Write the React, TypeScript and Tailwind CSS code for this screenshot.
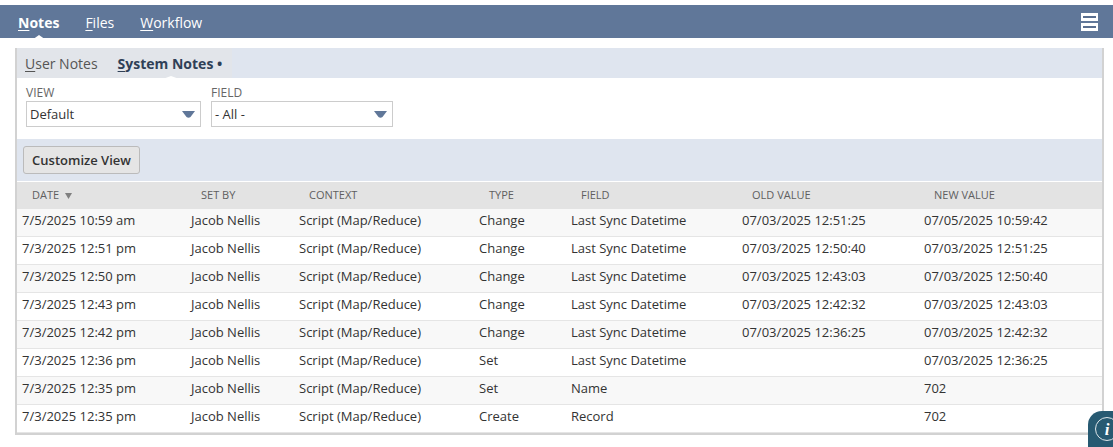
const rows = [
  ["7/5/2025 10:59 am", "Change", "Last Sync Datetime", "07/03/2025 12:51:25", "07/05/2025 10:59:42"],
  ["7/3/2025 12:51 pm", "Change", "Last Sync Datetime", "07/03/2025 12:50:40", "07/03/2025 12:51:25"],
  ["7/3/2025 12:50 pm", "Change", "Last Sync Datetime", "07/03/2025 12:43:03", "07/03/2025 12:50:40"],
  ["7/3/2025 12:43 pm", "Change", "Last Sync Datetime", "07/03/2025 12:42:32", "07/03/2025 12:43:03"],
  ["7/3/2025 12:42 pm", "Change", "Last Sync Datetime", "07/03/2025 12:36:25", "07/03/2025 12:42:32"],
  ["7/3/2025 12:36 pm", "Set", "Last Sync Datetime", "", "07/03/2025 12:36:25"],
  ["7/3/2025 12:35 pm", "Set", "Name", "", "702"],
  ["7/3/2025 12:35 pm", "Create", "Record", "", "702"],
];
const grid = "grid grid-cols-[169px_108px_180px_92px_171px_182px_1fr]";

function Caret() {
  return (
    <svg width="13" height="7" viewBox="0 0 13 7" className="mr-[4px]">
      <path d="M0 0H13L8.5 6Q6.5 7.5 4.5 6Z" fill="#607799" />
    </svg>
  );
}

function Select({ label, value, width }: { label: string; value: string; width: string }) {
  return (
    <div className={width}>
      <div className="h-[18px] pt-[1px] text-[12px] leading-[18px] text-[#666] uppercase">{label}</div>
      <div className="h-[26px] border border-[#ccc] bg-white flex items-center justify-between pl-[3px] pr-[1px] text-[13px] text-[#333]">
        <span className="pt-[2px]">{value}</span>
        <Caret />
      </div>
    </div>
  );
}

export default function App() {
  return (
    <div className="relative h-[447px] w-[1113px] overflow-hidden bg-white pt-[5px] font-['Open_Sans',sans-serif]">
      <div className="h-[33px] bg-[#607799] flex items-center justify-between pl-[18px] pr-[15px] text-[14px] text-white">
        <div className="flex gap-[26px] items-center pt-[1px]">
          <span className="relative font-bold">
            <u className="underline-offset-2">N</u>otes
            <span className="absolute left-[14px] top-[23px] w-0 h-0 border-x-[7px] border-x-transparent border-b-[5px] border-b-white" />
          </span>
          <span><u className="underline-offset-2">F</u>iles</span>
          <span><u className="underline-offset-2">W</u>orkflow</span>
        </div>
        <div className="flex flex-col gap-[2px]">
          <div className="w-[17px] h-[8px] border-x-2 border-y-[3px] border-white bg-[#5a6f90]" />
          <div className="w-[17px] h-[8px] border-x-2 border-y-[3px] border-white bg-[#5a6f90]" />
        </div>
      </div>

      <div className="mt-[10px] ml-[15px] w-[1089px] h-[387px] border-2 border-t-0 border-[#d2d2d2]">
        <div className="h-[30px] bg-[#dfe5ef] flex">
          <div className="flex h-full items-center text-[14px] pl-[8px] pr-[10px] gap-[20px] bg-[#e2e5ea]">
            <span className="text-[#555]"><u className="underline-offset-2">U</u>ser Notes</span>
            <span className="relative font-bold text-[#2f4057]">
              <u className="underline-offset-2">S</u>ystem Notes •
              <span className="absolute left-[42px] top-[23px] w-0 h-0 border-x-[11px] border-x-transparent border-b-[4px] border-b-white" />
            </span>
          </div>
        </div>
        <div className="h-[61px] bg-white flex gap-[10px] pl-[9px] pt-[5px]">
          <Select label="View" value="Default" width="w-[175px]" />
          <Select label="Field" value="- All -" width="w-[182px]" />
        </div>
        <div className="h-[42px] bg-[#dfe5ef] pl-[6px] flex items-center">
          <button className="h-[28px] w-[117px] pt-[1px] bg-[#e5e5e5] border border-[#bbb] rounded-[3px] text-[13px] font-semibold text-[#333]">
            Customize View
          </button>
        </div>
        <div>
          <div className={`${grid} h-[28px] items-center bg-[#e3e3e3] text-[11px] text-[#5f5f5f] uppercase border-t border-white`}>
            <span className="pl-[15px] flex items-center gap-[6px]">
              Date
              <svg width="7" height="6" viewBox="0 0 7 6"><path d="M0 0H7L3.5 6Z" fill="#808080" /></svg>
            </span>
            <span className="pl-[15px]">Set By</span>
            <span className="pl-[15px]">Context</span>
            <span className="pl-[15px]">Type</span>
            <span className="pl-[15px]">Field</span>
            <span className="pl-[15px]">Old Value</span>
            <span className="pl-[15px]">New Value</span>
          </div>
          {rows.map((r, i) => (
            <div
              key={i}
              className={`${grid} h-[28px] pb-[4px] items-center text-[13px] text-[#333] border-b border-[#e5e5e5] ${i % 2 === 0 && i !== 7 ? "bg-[#f8f8f8]" : "bg-white"}`}
            >
              <span className="pl-[5px]">{r[0]}</span>
              <span className="pl-[5px]">Jacob Nellis</span>
              <span className="pl-[5px]">Script (Map/Reduce)</span>
              <span className="pl-[5px]">{r[1]}</span>
              <span className="pl-[5px]">{r[2]}</span>
              <span className="pl-[5px]">{r[3]}</span>
              <span className="pl-[5px]">{r[4]}</span>
            </div>
          ))}
        </div>
      </div>

      <div className="absolute left-[1088px] top-[411px] w-[40px] h-[40px] rounded-tl-[14px] bg-[#275a72] pl-[7px] pt-[6px]">
        <div className="w-[24px] h-[24px] rounded-full border-[1.5px] border-[#dfe7ea] flex items-center justify-center text-white text-[17px] leading-none font-['Liberation_Serif',serif] italic font-bold">
          i
        </div>
      </div>
    </div>
  );
}
